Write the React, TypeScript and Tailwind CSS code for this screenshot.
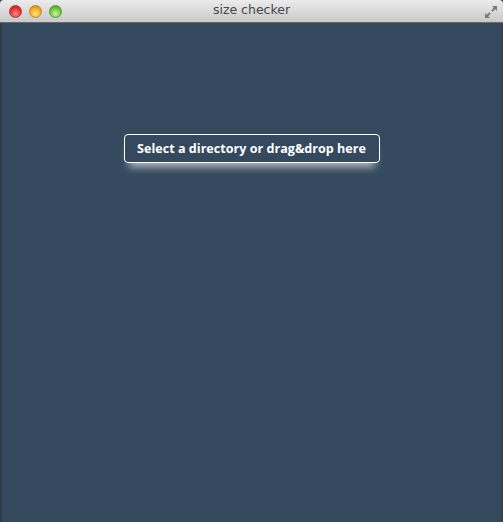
export default function App() {
  return (
    <div className="flex h-[522px] w-[503px] flex-col overflow-hidden bg-[#3a4a5a]">
      {/* Title bar */}
      <div className="relative flex h-[23px] shrink-0 items-center rounded-t-[4px] border-b border-[#6a6a6a] bg-gradient-to-b from-[#ececec] to-[#c9c9c9]">
        <div className="flex items-center gap-[7px] pl-[9px]">
          <span className="h-[13px] w-[13px] rounded-full border border-[#b03a3a] bg-[radial-gradient(circle_at_50%_70%,#ff8a8a,#e0302e_60%,#a81c1c)]" />
          <span className="h-[13px] w-[13px] rounded-full border border-[#b88a2a] bg-[radial-gradient(circle_at_50%_70%,#ffe08a,#f2a91c_60%,#b8790c)]" />
          <span className="h-[13px] w-[13px] rounded-full border border-[#5a9a3a] bg-[radial-gradient(circle_at_50%_70%,#c8f59a,#6dc23a_60%,#3f8a1c)]" />
        </div>
        <div className="absolute inset-0 flex items-center justify-center pb-[1px] font-['DejaVu_Sans',sans-serif] text-[12.5px] text-[#474747]">
          size checker
        </div>
        <svg className="absolute right-[5px] top-[5px]" width="14" height="14" viewBox="0 0 14 14">
          <path d="M8 1h5v5l-1.8-1.8L8.6 6.8 7.2 5.4 9.8 2.8z" fill="#7a7a7a" />
          <path d="M6 13H1V8l1.8 1.8 2.6-2.6 1.4 1.4-2.6 2.6z" fill="#7a7a7a" />
        </svg>
      </div>
      {/* Body */}
      <div className="flex flex-1 flex-col items-center border-l-[2px] border-r-[2px] border-l-[#2f3d4b] border-r-[#3b4148] bg-[#34495e] pt-[111px]">
        <button className="h-[29px] w-[256px] rounded-[4px] border border-white pt-[2px] font-['Open_Sans',sans-serif] text-[12.6px] font-bold text-white shadow-[0_9px_9px_-5px_rgba(230,230,230,0.75)]">
          Select a directory or drag&amp;drop here
        </button>
      </div>
    </div>
  );
}
